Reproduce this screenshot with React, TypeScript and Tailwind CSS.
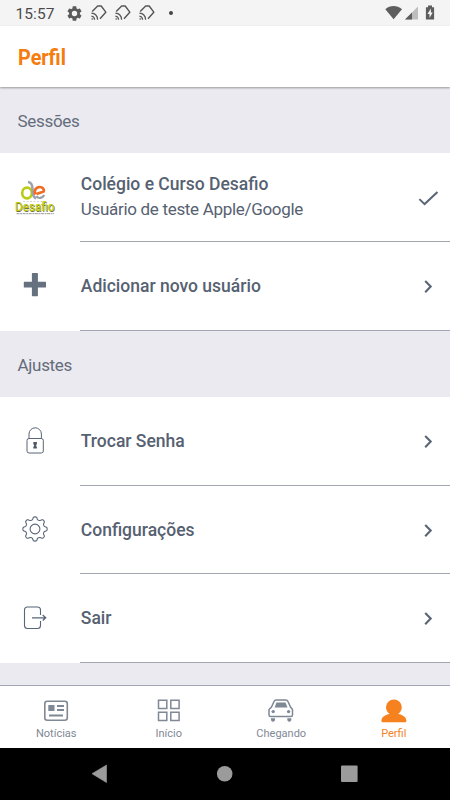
import type { ReactNode } from "react";

function CastIcon() {
  return (
    <svg width="16" height="16" viewBox="0 0 16 16" fill="none" stroke="#555" strokeWidth="1.4" strokeLinejoin="round">
      <path d="M1.200 6.400 6.400 1.200Q7 .8 7.800 1h2.400L14.800 7.200 9 13.700" />
      <path d="M.4 8.200c3.700.2 6 2.800 6.200 6.500M.4 11.200c2 .2 3 1.400 3.200 3.500" strokeWidth="1.200" />
      <circle cx="1.200" cy="14" r=".8" fill="#555" stroke="none" />
    </svg>
  );
}

function StatusBar() {
  return (
    <div className="flex h-[26px] items-center justify-between bg-[#f4f4f4] pr-[14px] pl-[15.5px]">
      <div className="flex items-center">
        <span className="w-[51px] pt-0.5 text-[15.5px] leading-[26px] tracking-[0.1px] text-[#4b4b4b]">15:57</span>
        <svg width="15" height="15" viewBox="2 2 20 20" fill="#5a5a5a">
          <path d="M19.140 12.940c.04-.3.060-.61.060-.94s-.020-.64-.070-.94l2.030-1.580c.18-.14.230-.41.120-.61l-1.920-3.320c-.12-.22-.37-.29-.59-.22l-2.390.96c-.5-.38-1.030-.7-1.620-.94L14.400 2.810c-.04-.24-.24-.41-.48-.41h-3.840c-.24 0-.43.170-.47.410L9.250 5.350c-.59.240-1.130.570-1.620.940l-2.390-.96c-.22-.08-.47 0-.59.220L2.740 8.870c-.12.210-.08.470.12.610l2.030 1.580c-.05.300-.09.630-.09.940s.020.640.070.940l-2.030 1.580c-.18.140-.23.410-.12.610l1.920 3.320c.12.220.37.290.59.220l2.390-.96c.5.380 1.030.700 1.620.940l.36 2.540c.05.240.24.410.48.410h3.840c.24 0 .44-.17.47-.41l.36-2.540c.59-.24 1.130-.56 1.620-.94l2.390.960c.22.080.47 0 .59-.22l1.920-3.320c.12-.22.070-.47-.12-.61zM12 15.600a3.600 3.600 0 1 1 0-7.200 3.600 3.600 0 0 1 0 7.200z" />
        </svg>
        <div className="ml-[9px] flex gap-2">
          <CastIcon />
          <CastIcon />
          <CastIcon />
        </div>
        <span className="ml-[14.5px] size-1 rounded-full bg-[#444]" />
      </div>
      <svg width="51" height="16" viewBox="0 0 51 16" fill="#5d5d5d">
        <path d="M.3 4.200C5 0 12 0 17 4.200L8.600 14.200z" />
        <path d="M33 1.500V14.500H20z" fill="#bdbdbd" />
        <path d="M27 7.500v7h-7z" />
        <path d="M43 .6h4v1.600h2.100v12.300h-8.200V2.200H43z" />
        <path d="M45.900 3.500 42.500 9h2v3.900L47.700 7.600h-1.800z" fill="#f4f4f4" />
      </svg>
    </div>
  );
}

function DesafioLogo() {
  return (
    <svg width="80" height="88" viewBox="0 153 80 88">
      <g fill="none">
        <ellipse cx="27" cy="193" rx="4.800" ry="5.400" stroke="#b9cc16" strokeWidth="2.600" />
        <path d="M28 182c3.500.3 4.500 2.500 4.500 7.500 0 4.500.5 7.500 3.500 9" stroke="#9da3ad" strokeWidth="2.600" />
        <path d="M35.500 194.500c-2-4 .5-7.500 4.200-7.500 3 0 4.600 2.300 3.900 4.500l-7 2.500" stroke="#f26b21" strokeWidth="2.700" />
        <path d="M36.300 196.300c2.200 2.800 6.200 2 8-1.300" stroke="#999fa8" strokeWidth="2.200" />
      </g>
      <path d="M23 201.500h21" stroke="#ccc" strokeWidth=".8" strokeDasharray="2 1.500" />
      <text x="15.600" y="211.500" textLength="39.500" lengthAdjust="spacingAndGlyphs" fontSize="12" fill="#6f7548">
        Desafio
      </text>
      <text x="15" y="211" textLength="39.500" lengthAdjust="spacingAndGlyphs" fontSize="12" fill="#c4cc08" stroke="#c4cc08" strokeWidth=".2">
        Desafio
      </text>
      <path d="M16.500 213.700h37.500" stroke="#999" strokeWidth="1" strokeDasharray="3 .6 2 .5" />
    </svg>
  );
}

function PlusIcon() {
  return (
    <svg width="80" height="88" viewBox="0 242 80 88">
      <path d="M32.500 273h4.800q.6 0 .6.600v8.200h7.500q.6 0 .6.600v4.500q0 .6-.6.600h-7.500v8.100q0 .6-.6.600h-4.800q-.6 0-.6-.6v-8.100h-7.500q-.6 0-.6-.6v-4.500q0-.6.6-.6h7.500v-8.200q0-.6.6-.6z" fill="#667180" />
    </svg>
  );
}

function LockIcon() {
  return (
    <svg width="80" height="88" viewBox="0 397 80 88" fill="none" stroke="#596579" strokeWidth="1">
      <rect x="27" y="438.500" width="16.300" height="14.500" rx="2" />
      <path d="M29 438.500v-4.500a6.200 6.200 0 0 1 12.400 0v4.500" />
      <path d="M33.300 442h3.600v2.500h-.7v2h.7v2h-3.600v-2h.7v-2h-.7z" fill="#4f5b6b" stroke="none" />
    </svg>
  );
}

// eight rounded teeth with shallow valleys between them
const gearPoints = Array.from({ length: 120 }, (_, i) => {
  const a = (i / 120) * Math.PI * 2;
  const wave = Math.cos(8 * a);
  const r = 10.800 + 1.400 * Math.tanh(1.800 * wave);
  return `${(35 + r * Math.sin(a)).toFixed(2)},${(529 - r * Math.cos(a)).toFixed(2)}`;
}).join(" ");

function GearIcon() {
  return (
    <svg width="80" height="88" viewBox="0 486 80 88" fill="none" stroke="#596579" strokeWidth="1.100" strokeLinejoin="round">
      <circle cx="35" cy="529" r="4.900" />
      <polygon points={gearPoints} />
    </svg>
  );
}

function ExitIcon() {
  return (
    <svg width="80" height="88" viewBox="0 574 80 88" fill="none" stroke="#596579" strokeWidth="1.100">
      <path d="M40.500 615V610a3 3 0 0 0-3-3h-10a3 3 0 0 0-3 3v15.500a3 3 0 0 0 3 3h10a3 3 0 0 0 3-3V621" />
      <path d="M32 617.800h13.500M42.700 615l3 2.800-3 2.800" strokeWidth="1.300" />
    </svg>
  );
}

function Chevron() {
  return (
    <svg width="28" height="28" viewBox="0 0 28 28" fill="none" stroke="#5a6575" strokeWidth="2.100">
      <path d="m11.200 9 5.500 5.600-5.500 5.600" />
    </svg>
  );
}

function Check() {
  return (
    <svg width="28" height="28" viewBox="0 0 28 28" fill="none" stroke="#5a6575" strokeWidth="2">
      <path d="m5.400 16.100 5.200 5L23.500 8.900" />
    </svg>
  );
}

function SectionTitle({ children }: { children: ReactNode }) {
  return <h2 className="flex h-full items-center pt-[3px] pl-[17.500px] text-[17px] tracking-[-0.300px] text-[#646c7a]">{children}</h2>;
}

function Row({ icon, title, subtitle, checked }: { icon: ReactNode; title: string; subtitle?: string; checked?: boolean }) {
  return (
    <div className="flex h-full bg-white">
      <div className="w-20 shrink-0">{icon}</div>
      <div className="flex flex-1 items-center justify-between border-b border-[#a1a6b1] pr-2 pl-[0.800px]">
        <div className="text-[#566171]">
          <p className="text-[17.500px] leading-[26px] font-medium">{title}</p>
          {subtitle && <p className="pb-px text-[17px] leading-[25px] tracking-[-0.310px]">{subtitle}</p>}
        </div>
        {checked ? <Check /> : <Chevron />}
      </div>
    </div>
  );
}

function Tab({ label, active, children }: { label: string; active?: boolean; children: ReactNode }) {
  return (
    <div className={active ? "flex flex-1 flex-col items-center text-[#f5821f]" : "flex flex-1 flex-col items-center text-[#7f8895]"}>
      <svg className="mt-[9px]" width="32" height="32" viewBox="0 0 32 32" fill="none" stroke="currentColor">
        {children}
      </svg>
      <span className="text-[11px] leading-[14px]">{label}</span>
    </div>
  );
}

function TabBar() {
  return (
    <nav className="flex h-[63px] border-t border-[#a1a6b1] bg-white">
      <Tab label="Notícias">
        <rect x="4.800" y="6.200" width="22.500" height="19" rx="2.500" strokeWidth="1.600" />
        <path d="M8.300 10h6.200v6H8.300z" fill="currentColor" stroke="none" />
        <path d="M17 11h7M17 15h7M9 20.500h14" strokeWidth="2" />
      </Tab>
      <Tab label="Início">
        <path d="M5.500 5.300h8.300v8.300H5.500zM17.800 5.300h8.300v8.300h-8.300zM5.500 17.300h8.300v8.300H5.500zM17.800 17.300h8.300v8.300h-8.300z" strokeWidth="1.500" />
      </Tab>
      <Tab label="Chegando">
        <path d="M6.500 12 9 6.500Q9.500 5 11.500 5h9Q22.500 5 23 6.500L25.500 12l2 2.500V20q0 1.500-1.500 1.500H5.500Q4 21.500 4 20v-5.500z" strokeWidth="1.500" />
        <path d="M11.500 7.500h9l2 5H9.600z" fill="currentColor" stroke="none" />
        <g fill="currentColor" stroke="none">
          <circle cx="8.200" cy="16.600" r="1.700" />
          <circle cx="23.600" cy="16.600" r="1.700" />
          <path d="M6 23.300h4v2q-2 3-4 0zM22.300 23.300h4v2q-2 3-4 0z" />
        </g>
      </Tab>
      <Tab label="Perfil" active>
        <path d="M11.700 19C9 17.300 8 14.500 8 12.300a7.900 7.700 0 0 1 15.800 0c0 2.200-1 5-3.700 6.700 4.500.8 7.900 2.700 8.300 6.700q0 1.500-1.300 1.500H4.700q-1.300 0-1.300-1.500c.4-4 3.800-5.900 8.300-6.700z" fill="currentColor" stroke="none" />
      </Tab>
    </nav>
  );
}

export default function App() {
  return (
    <div className="flex h-[800px] w-[450px] flex-col overflow-hidden bg-[#ebeaf0] font-['Roboto',sans-serif]">
      <StatusBar />
      <header className="z-10 flex h-[61px] items-center bg-white pt-[3px] pl-[17.500px] shadow-[0_1px_2px_#999]">
        <h1 className="origin-left scale-x-[0.880] text-[22.5px] font-bold text-[#f57c0d]">Perfil</h1>
      </header>
      <main className="grid h-[598px] grid-cols-1 grid-rows-[66px_89px_89px_66px_89px_88px_89px]">
        <SectionTitle>Sessões</SectionTitle>
        <Row icon={<DesafioLogo />} title="Colégio e Curso Desafio" subtitle="Usuário de teste Apple/Google" checked />
        <Row icon={<PlusIcon />} title="Adicionar novo usuário" />
        <SectionTitle>Ajustes</SectionTitle>
        <Row icon={<LockIcon />} title="Trocar Senha" />
        <Row icon={<GearIcon />} title="Configurações" />
        <Row icon={<ExitIcon />} title="Sair" />
      </main>
      <TabBar />
      <footer className="flex h-[52px] justify-center bg-black">
        <svg width="270" height="52" viewBox="90 748 270 52" fill="#9b9b9b">
          <path d="M92 773.700 106.500 765v17.600z" stroke="#9b9b9b" strokeWidth=".6" strokeLinejoin="round" />
          <circle cx="224.700" cy="773.700" r="7.800" />
          <rect x="341" y="765.500" width="16.600" height="16.500" rx="1" />
        </svg>
      </footer>
    </div>
  );
}
